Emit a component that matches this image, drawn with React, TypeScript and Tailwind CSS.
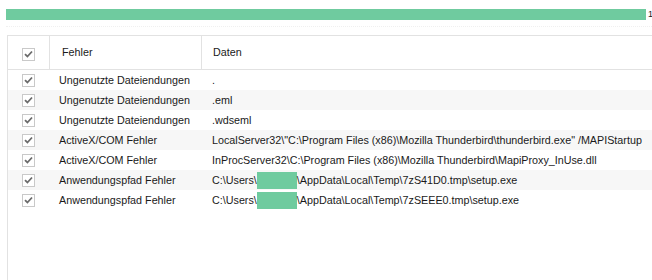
import React from 'react';

const rows = [
  { fehler: 'Ungenutzte Dateiendungen', daten: '.' },
  { fehler: 'Ungenutzte Dateiendungen', daten: '.eml' },
  { fehler: 'Ungenutzte Dateiendungen', daten: '.wdseml' },
  { fehler: 'ActiveX/COM Fehler', daten: 'LocalServer32\\"C:\\Program Files (x86)\\Mozilla Thunderbird\\thunderbird.exe" /MAPIStartup' },
  { fehler: 'ActiveX/COM Fehler', daten: 'InProcServer32\\C:\\Program Files (x86)\\Mozilla Thunderbird\\MapiProxy_InUse.dll' },
  { fehler: 'Anwendungspfad Fehler', daten: 'user', rest: '\\AppData\\Local\\Temp\\7zS41D0.tmp\\setup.exe' },
  { fehler: 'Anwendungspfad Fehler', daten: 'user', rest: '\\AppData\\Local\\Temp\\7zSEEE0.tmp\\setup.exe' },
];

const Check: React.FC = () => (
  <div className="w-[13px] h-[13px] border border-[#c9c9c9] bg-white flex items-center justify-center">
    <svg width="9" height="8" viewBox="0 0 9 8">
      <path d="M1 4.2 L3.4 6.5 L8 1.5" fill="none" stroke="#6b6b6b" strokeWidth="1.8" />
    </svg>
  </div>
);

export default function App() {
  return (
    <div className="w-[652px] h-[280px] bg-white overflow-hidden font-['Liberation_Sans',Arial,sans-serif] text-[10.75px] text-[#1a1a1a]">
      <div className="flex items-center pt-2 pl-[6px] h-[20px] whitespace-nowrap">
        <div className="w-[640px] h-[11px] bg-[#6fcb9f] shrink-0" />
        <span className="ml-[2px] text-[9px] leading-none">1</span>
      </div>
      <div className="ml-[6px] mt-[6px] border-t border-dotted border-[#f0f0f0]" />
      <div className="ml-[7px] mt-[8px] border-l border-t border-[#e2e2e2] h-[246px]">
        <div className="flex h-[34px] border-b border-[#e2e2e2]">
          <div className="w-[41px] flex items-center justify-center pt-[3px]">
            <Check />
          </div>
          <div className="w-[152px] border-l border-[#e2e2e2] pl-[12px] flex items-center">Fehler</div>
          <div className="flex-1 border-l border-[#e2e2e2] pl-[11px] flex items-center">Daten</div>
        </div>
        {rows.map((r, i) => (
          <div key={i} className={`flex h-[20px] items-center whitespace-nowrap ${i % 2 === 1 ? 'bg-[#f7f7f7]' : 'bg-white'}`}>
            <div className="w-[41px] flex items-center justify-center">
              <Check />
            </div>
            <div className="w-[152px] pl-[10px]">{r.fehler}</div>
            <div className="flex-1 pl-[11px] flex items-center">
              {r.rest ? (
                <>
                  <span>C:\Users\</span>
                  <span className="inline-block w-[40px] h-[17px] bg-[#6fcb9f]" />
                  <span>{r.rest}</span>
                </>
              ) : (
                <span>{r.daten}</span>
              )}
            </div>
          </div>
        ))}
      </div>
    </div>
  );
}
